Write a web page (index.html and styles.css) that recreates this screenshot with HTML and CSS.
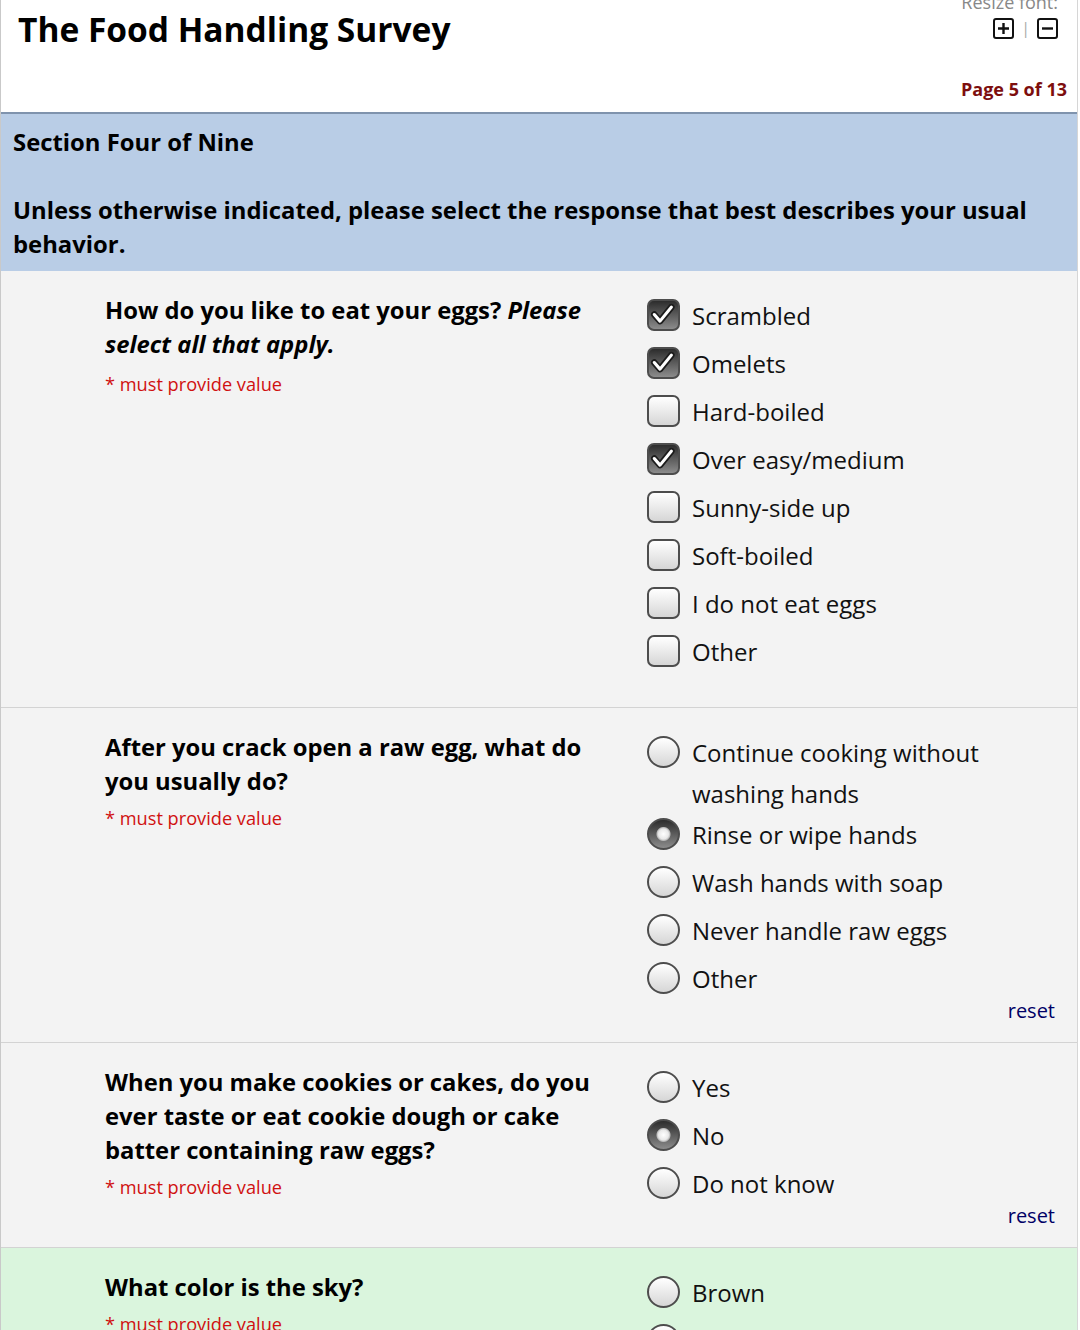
FILE: index.html
```html
<!DOCTYPE html>
<html lang="en">
<head>
  <meta charset="UTF-8" />
  <title>The Food Handling Survey</title>
  <link rel="stylesheet" href="styles.css">
</head>
<body>
  <div class="survey">

    <!-- Header -->
    <header class="top">
      <h1>The Food Handling Survey</h1>
      <div class="tools">
        <div class="resize">
          <div class="resize-label">Resize font:</div>
          <div class="resize-btns">
            <svg class="ico" width="21" height="21" viewBox="0 0 21 21">
              <rect x="1" y="1" width="19" height="19" rx="2" fill="none" stroke="#111" stroke-width="2"/>
              <path d="M10.5 5v11M5 10.5h11" stroke="#111" stroke-width="2.4"/>
            </svg>
            <span class="sep">|</span>
            <svg class="ico" width="21" height="21" viewBox="0 0 21 21">
              <rect x="1" y="1" width="19" height="19" rx="2" fill="none" stroke="#111" stroke-width="2"/>
              <path d="M5 10.5h11" stroke="#111" stroke-width="2.4"/>
            </svg>
          </div>
        </div>
        <div class="page-num">Page 5 of 13</div>
      </div>
    </header>

    <!-- Section heading -->
    <div class="section-head">
      Section Four of Nine<br><br>
      Unless otherwise indicated, please select the response that best describes your usual behavior.
    </div>

    <!-- Question 1 -->
    <div class="q-row no-reset">
      <div class="q-text">
        <div class="q-label">How do you like to eat your eggs? <i>Please select all that apply.</i></div>
        <div class="required first">* must provide value</div>
      </div>
      <div class="q-opts">
        <label class="opt"><span class="box checked"><svg viewBox="0 0 33 32" width="29" height="28"><path d="M6 15.5l6.5 7.5 13-16" fill="none" stroke="#1c1c1c" stroke-width="7.5" stroke-linecap="round" stroke-linejoin="round"/><path d="M6 15.5l6.5 7.5 13-16" fill="none" stroke="#fff" stroke-width="3.6" stroke-linecap="round" stroke-linejoin="round"/></svg></span><span class="opt-text">Scrambled</span></label>
        <label class="opt"><span class="box checked"><svg viewBox="0 0 33 32" width="29" height="28"><path d="M6 15.5l6.5 7.5 13-16" fill="none" stroke="#1c1c1c" stroke-width="7.5" stroke-linecap="round" stroke-linejoin="round"/><path d="M6 15.5l6.5 7.5 13-16" fill="none" stroke="#fff" stroke-width="3.6" stroke-linecap="round" stroke-linejoin="round"/></svg></span><span class="opt-text">Omelets</span></label>
        <label class="opt"><span class="box"></span><span class="opt-text">Hard-boiled</span></label>
        <label class="opt"><span class="box checked"><svg viewBox="0 0 33 32" width="29" height="28"><path d="M6 15.5l6.5 7.5 13-16" fill="none" stroke="#1c1c1c" stroke-width="7.5" stroke-linecap="round" stroke-linejoin="round"/><path d="M6 15.5l6.5 7.5 13-16" fill="none" stroke="#fff" stroke-width="3.6" stroke-linecap="round" stroke-linejoin="round"/></svg></span><span class="opt-text">Over easy/medium</span></label>
        <label class="opt"><span class="box"></span><span class="opt-text">Sunny-side up</span></label>
        <label class="opt"><span class="box"></span><span class="opt-text">Soft-boiled</span></label>
        <label class="opt"><span class="box"></span><span class="opt-text">I do not eat eggs</span></label>
        <label class="opt"><span class="box"></span><span class="opt-text">Other</span></label>
      </div>
    </div>

    <!-- Question 2 -->
    <div class="q-row">
      <div class="q-text">
        <div class="q-label">After you crack open a raw egg, what do you usually do?</div>
        <div class="required">* must provide value</div>
      </div>
      <div class="q-opts">
        <label class="opt"><span class="box radio"></span><span class="opt-text">Continue cooking without washing hands</span></label>
        <label class="opt"><span class="box radio checked"></span><span class="opt-text">Rinse or wipe hands</span></label>
        <label class="opt"><span class="box radio"></span><span class="opt-text">Wash hands with soap</span></label>
        <label class="opt"><span class="box radio"></span><span class="opt-text">Never handle raw eggs</span></label>
        <label class="opt"><span class="box radio"></span><span class="opt-text">Other</span></label>
        <div class="reset"><a href="#">reset</a></div>
      </div>
    </div>

    <!-- Question 3 -->
    <div class="q-row">
      <div class="q-text">
        <div class="q-label">When you make cookies or cakes, do you ever taste or eat cookie dough or cake batter containing raw eggs?</div>
        <div class="required">* must provide value</div>
      </div>
      <div class="q-opts">
        <label class="opt"><span class="box radio"></span><span class="opt-text">Yes</span></label>
        <label class="opt"><span class="box radio checked"></span><span class="opt-text">No</span></label>
        <label class="opt"><span class="box radio"></span><span class="opt-text">Do not know</span></label>
        <div class="reset"><a href="#">reset</a></div>
      </div>
    </div>

    <!-- Question 4 (attention check) -->
    <div class="q-row green">
      <div class="q-text">
        <div class="q-label">What color is the sky?</div>
        <div class="required">* must provide value</div>
      </div>
      <div class="q-opts">
        <label class="opt"><span class="box radio"></span><span class="opt-text">Brown</span></label>
        <label class="opt"><span class="box radio"></span><span class="opt-text">Blue</span></label>
        <label class="opt"><span class="box radio"></span><span class="opt-text">Green</span></label>
        <div class="reset"><a href="#">reset</a></div>
      </div>
    </div>

  </div>
</body>
</html>
```

FILE: styles.css
```css
html, body {
  margin: 0;
  padding: 0;
  background: #fff;
  font-family: "Open Sans", "Noto Sans", sans-serif;
  color: #000;
}

body {
  overflow: hidden;
}

.survey {
  margin-right: 2px;
  border-left: 1px solid #c9c9c9;
  border-right: 1px solid #d6d6d6;
}

/* Header */
.top {
  display: flex;
  justify-content: space-between;
  align-items: flex-start;
  height: 112px;
  background: #fff;
  border-bottom: 2px solid #7f93ad;
}

.top h1 {
  margin: 9px 0 0 17px;
  font-size: 33.5px;
  line-height: 40px;
  font-weight: 700;
}

.tools {
  margin-top: -9px;
  text-align: right;
}

.resize {
  padding-right: 19px;
  color: #888;
  font-size: 18px;
  line-height: 22px;
}

.resize-btns {
  display: flex;
  justify-content: flex-end;
  align-items: center;
  gap: 7px;
  margin-top: 4px;
}

.ico {
  display: block;
}

.sep {
  color: #aaa;
  font-size: 16px;
  line-height: 22px;
}

.page-num {
  margin-top: 38px;
  padding-right: 10px;
  color: #7d0e0e;
  font-size: 18px;
  line-height: 24px;
  font-weight: 700;
}

/* Section heading */
.section-head {
  padding: 11px 12px 10px 12px;
  background: #b9cde6;
  font-size: 23.85px;
  line-height: 34px;
  font-weight: 700;
}

/* Question rows */
.q-row {
  display: flex;
  padding: 22px 0 19px 104px;
  background: #f3f3f3;
  border-bottom: 1px solid #d3d3d3;
}

.q-row.no-reset {
  padding-bottom: 35px;
}

.q-row.green {
  background: #daf5dd;
  border-bottom: none;
}

.q-text {
  width: 500px;
  flex: none;
}

.q-label {
  font-size: 23.8px;
  line-height: 34px;
  font-weight: 700;
}

.required {
  margin-top: 8px;
  color: #d01010;
  font-size: 18.2px;
  line-height: 24px;
}

.required.first {
  margin-top: 11px;
}

.q-opts {
  flex: 1;
  margin-left: 42px;
  margin-top: 2px;
  padding-right: 22px;
}

.opt {
  display: flex;
  align-items: flex-start;
  min-height: 48px;
  font-size: 24px;
  line-height: 41px;
  color: #111;
}

.opt:last-of-type {
  min-height: 0;
}

.box {
  flex: none;
  display: flex;
  align-items: center;
  justify-content: center;
  width: 33px;
  height: 32px;
  box-sizing: border-box;
  margin: 4px 12px 0 0;
  border: 2px solid #4d4d4d;
  border-radius: 7px;
  background: linear-gradient(#ffffff, #d6d6d6);
}

.box.checked {
  background: linear-gradient(#2c2c2c, #8c8c8c);
}

.box.radio {
  border-radius: 50%;
}

.box.radio.checked {
  background:
    radial-gradient(circle at 50% 50%, #ffffff 0, #e8e8e8 5px, #bbbbbb 6.5px, rgba(0,0,0,0) 7.5px),
    linear-gradient(#2c2c2c, #8c8c8c);
}

.box svg {
  display: block;
}

.reset {
  text-align: right;
  font-size: 20px;
  line-height: 24px;
}

.reset a {
  color: #000066;
  text-decoration: none;
}
```
